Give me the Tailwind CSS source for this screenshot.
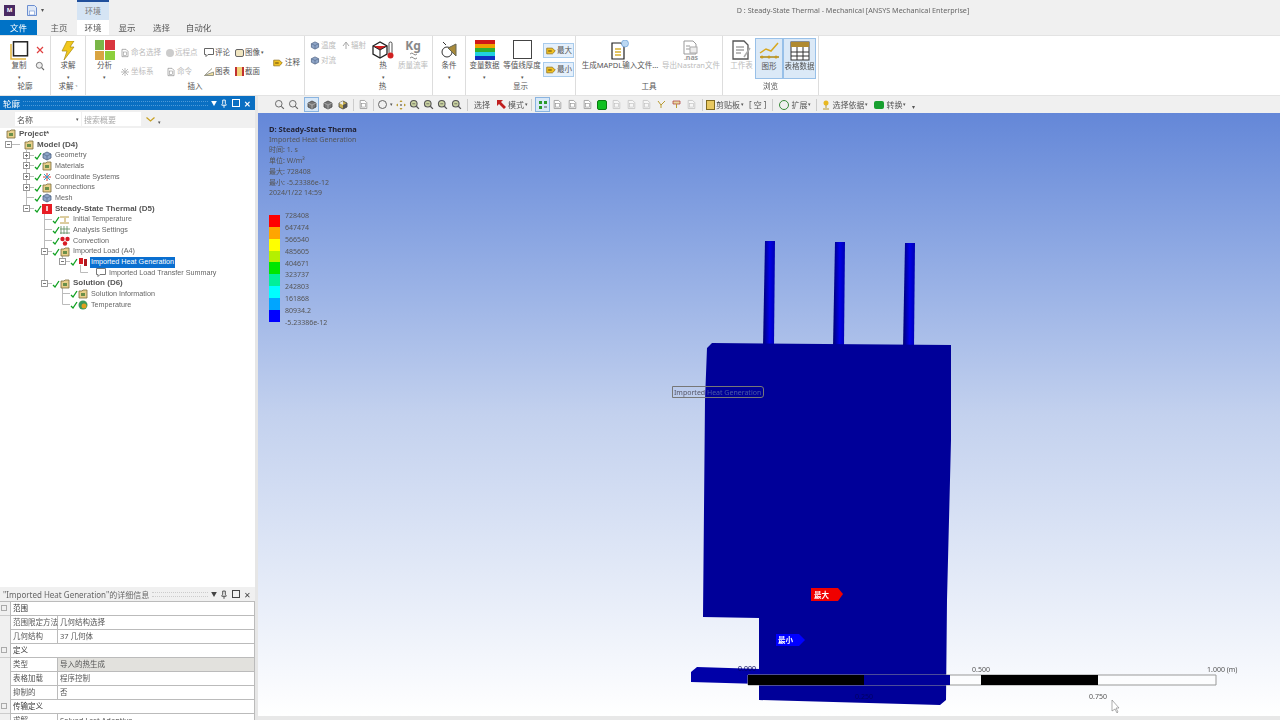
<!DOCTYPE html>
<html lang="zh">
<head>
<meta charset="UTF-8">
<title>D : Steady-State Thermal - Mechanical</title>
<script src="https://cdn.jsdelivr.net/npm/@tailwindcss/browser@4"></script>
</head>
<body class="w-[1280px] h-[720px] overflow-hidden bg-[#f0f0f0] text-[#555] text-[7.5px] leading-[11px] blur-[0.3px] font-['Noto_Sans','Noto_Sans_CJK_SC',sans-serif]">

<!-- shared icons -->
<svg class="hidden">
  <symbol id="box" viewBox="0 0 10 10"><path d="M1 2h3l1-1h4v8H1z" fill="#e8cf8a" stroke="#7a6a3a" stroke-width=".8"/><rect x="3" y="4" width="4" height="3" fill="#6b8f4a"/></symbol>
  <symbol id="cube" viewBox="0 0 10 10"><path d="M1 3l4-2 4 2v4l-4 2-4-2z" fill="#8fa6c8" stroke="#4a5f80" stroke-width=".8"/><path d="M1 3l4 2 4-2M5 5v4" fill="none" stroke="#4a5f80" stroke-width=".6"/></symbol>
  <symbol id="gcube" viewBox="0 0 10 10"><path d="M1 3l4-2 4 2v4l-4 2-4-2z" fill="#777" stroke="#444" stroke-width=".8"/><path d="M1 3l4 2 4-2M5 5v4" fill="none" stroke="#ccc" stroke-width=".6"/></symbol>
  <symbol id="ccube" viewBox="0 0 10 10"><path d="M1 3l4-2 4 2v4l-4 2-4-2z" fill="#c8b050" stroke="#444" stroke-width=".8"/><path d="M5 5v4l4-2V3z" fill="#555"/><path d="M1 3l4-2v4z" fill="#eee"/></symbol>
  <symbol id="doc" viewBox="0 0 15 15"><path d="M3 2h6l3 3v8H3z" fill="#fff" stroke="#8a8a8a"/><rect x="5" y="6" width="5" height="5" fill="none" stroke="#8a8a8a" stroke-width=".8"/></symbol>
  <symbol id="mag" viewBox="0 0 15 15"><circle cx="6.500" cy="6.500" r="4.500" fill="#eee" stroke="#666" stroke-width="1.300"/><path d="M10 10l3.500 3.500" stroke="#666" stroke-width="1.600"/></symbol>
  <symbol id="magg" viewBox="0 0 15 15"><circle cx="6.500" cy="6.500" r="4.500" fill="#c9d2a0" stroke="#555" stroke-width="1.500"/><path d="M10 10l3.500 3.500" stroke="#555" stroke-width="1.800"/><path d="M4.500 6.500h4" stroke="#555"/></symbol>
  <symbol id="tag" viewBox="0 0 14 10"><path d="M1 1h8l4 4-4 4H1z" fill="#f0c020" stroke="#8a6a10"/><rect x="3" y="4" width="5" height="2" fill="#8a6a10"/></symbol>
  <symbol id="check" viewBox="0 0 8 8"><path d="M1 5l2 2 4-6" fill="none" stroke="#10a020" stroke-width="1.300"/></symbol>
  <symbol id="pin" viewBox="0 0 7 10"><path d="M2 1h3v4l1 1v1H1V6l1-1zM3.500 7v3" fill="none" stroke="currentColor" stroke-width="1.100"/></symbol>
</svg>

<!-- title bar and tabs -->
<header class="h-[35px] relative flex flex-col">
  <div class="h-5 flex items-center">
    <div class="w-[11px] h-[11px] ml-1 bg-[#4a2a63] text-white text-[6px] leading-[11px] text-center font-bold">M</div>
    <svg class="ml-3 w-[10px] h-[11px]" viewBox="0 0 10 11"><path d="M.5.500h7l2 2v8h-9z" fill="#dfe8f6" stroke="#6b8ed0"/><rect x="2.500" y="6" width="5" height="4" fill="#fff" stroke="#6b8ed0" stroke-width=".6"/></svg>
    <span class="ml-1 text-[6px]">▾</span>
    <div class="absolute left-[77px] top-0 w-[32px] h-[20px] bg-[#d5e4f4] border-t-2 border-[#1f4f9c] text-center text-[8px] leading-[18px] text-[#777]">环境</div>
    <div class="flex-1 text-center pl-[382px] text-[7.2px] text-[#666]">D : Steady-State Thermal - Mechanical [ANSYS Mechanical Enterprise]</div>
  </div>
  <nav class="h-[15px] flex items-stretch text-center leading-[15px] text-[8.5px]">
    <div class="w-[37px] bg-[#0072c6] text-white">文件</div>
    <div class="w-[40px] pl-[4px]">主页</div>
    <div class="w-[32px] bg-white">环境</div>
    <div class="w-[36px]">显示</div>
    <div class="w-[33px]">选择</div>
    <div class="w-[41px]">自动化</div>
  </nav>
</header>

<!-- ribbon -->
<section class="h-[61px] bg-white border-y border-[#e3e3e3] flex">
  <div class="w-[51px] flex flex-col border-r border-[#ddd]">
    <div class="h-[45px] flex pl-[9px] pt-[5px]">
      <div class="w-[20px] flex flex-col items-center">
        <svg class="w-[19px] h-[19px]" viewBox="0 0 19 19"><path d="M1 3v15h15" fill="none" stroke="#e3b53a" stroke-width="1.500"/><rect x="3.500" y=".8" width="14" height="14" fill="#fff" stroke="#222" stroke-width="1.500"/></svg>
        <span>复制</span><span class="text-[5px] leading-[7px] mt-[3px]">▾</span>
      </div>
      <div class="ml-[6px] flex flex-col items-center gap-[7px] pt-[5px]">
        <svg class="w-[8px] h-[8px]" viewBox="0 0 8 8"><path d="M1 1l6 6M7 1L1 7" stroke="#e04040" stroke-width="1.200"/></svg>
        <svg class="w-[10px] h-[10px]"><use href="#mag"/></svg>
      </div>
    </div>
    <div class="h-[14px] text-center leading-[11px]">轮廓</div>
  </div>

  <div class="w-[35px] flex flex-col border-r border-[#ddd]">
    <div class="h-[45px] flex flex-col items-center pt-[5px]">
      <svg class="w-[14px] h-[19px]" viewBox="0 0 14 19"><path d="M6 0h7L9 6h4L3 19l3-9H1z" fill="#f2c81c" stroke="#a88a10" stroke-width=".7"/></svg>
      <span>求解</span><span class="text-[5px] leading-[7px] mt-[3px]">▾</span>
    </div>
    <div class="h-[14px] text-center leading-[11px]">求解 <span class="text-[5px]">⌝</span></div>
  </div>

  <div class="w-[219px] flex flex-col border-r border-[#ddd]">
    <div class="h-[45px] flex pt-[4px]">
      <div class="w-[34px] pl-[3px] flex flex-col items-center">
        <div class="grid grid-cols-2 gap-[1px] w-[20px] h-[20px]">
          <div class="bg-[#7ab648]"></div><div class="bg-[#d9363e]"></div><div class="bg-[#d9a441]"></div><div class="bg-[#8ccf3c]"></div>
        </div>
        <span>分析</span><span class="text-[5px] leading-[7px] mt-[3px]">▾</span>
      </div>
      <div class="grid grid-cols-[46px_38px_31px_38px] grid-rows-[19px_19px] pt-[3px] h-fit">
        <div class="flex items-center gap-[1px] text-[#bbb]"><svg class="w-[10px] h-[10px]"><use href="#doc"/></svg>命名选择</div>
        <div class="flex items-center gap-[1px] text-[#bbb]"><span class="w-[8px] h-[8px] rounded-full bg-[#ccc]"></span>远程点</div>
        <div class="flex items-center gap-[1px]"><svg class="w-[10px] h-[9px]" viewBox="0 0 10 9"><path d="M.5.500h9v6H4L2 8.500V6.500H.5z" fill="#fff" stroke="#666"/></svg>评论</div>
        <div class="flex items-center gap-[1px]"><span class="w-[9px] h-[8px] bg-[#f0e5c0] border border-[#666] rounded-[2px]"></span>图像<span class="text-[5px]">▾</span></div>
        <div class="flex items-center gap-[1px] text-[#bbb]"><svg class="w-[10px] h-[10px]" viewBox="0 0 10 10"><path d="M5 1v8M1 5h8M2 2l6 6M8 2l-6 6" stroke="#bbb"/></svg>坐标系</div>
        <div class="flex items-center gap-[1px] text-[#bbb]"><svg class="w-[10px] h-[10px]"><use href="#doc"/></svg>命令</div>
        <div class="flex items-center gap-[1px]"><svg class="w-[10px] h-[9px]" viewBox="0 0 10 9"><path d="M.5 8.500L8 1.500M.5 8.500H9.500V5z" fill="#f0dfa0" stroke="#998"/></svg>图表</div>
        <div class="flex items-center gap-[1px]"><span class="w-[9px] h-[9px] bg-[#f1d27a] border-x-2 border-[#c03030]"></span>截面</div>
      </div>
      <div class="mt-[17px] h-fit flex items-center gap-[2px] whitespace-nowrap"><svg class="w-[10px] h-[8px]"><use href="#tag"/></svg>注释</div>
    </div>
    <div class="h-[14px] text-center leading-[11px]">插入</div>
  </div>

  <div class="w-[128px] flex flex-col border-r border-[#ddd]">
    <div class="h-[45px] flex pt-[4px] pl-[5px]">
      <div class="w-[59px] flex flex-col gap-[4px] text-[#bbb]">
        <div class="flex gap-[6px] whitespace-nowrap">
          <span class="flex items-center gap-[1px]"><svg class="w-[10px] h-[9px]"><use href="#cube"/></svg>温度</span>
          <span class="flex items-center gap-[1px]"><svg class="w-[8px] h-[9px]" viewBox="0 0 8 9"><path d="M4 1v7M1 5l3-4 3 4" fill="none" stroke="#aaa"/></svg>辐射</span>
        </div>
        <span class="flex items-center gap-[1px]"><svg class="w-[10px] h-[9px]"><use href="#cube"/></svg>对流</span>
      </div>
      <div class="w-[28px] flex flex-col items-center">
        <svg class="w-[22px] h-[20px]" viewBox="0 0 22 20"><path d="M1 6l7-4 7 4v8l-7 4-7-4z" fill="#fff" stroke="#222" stroke-width="1.300"/><path d="M1 6l7 4 7-4" fill="#d02020" stroke="#222"/><path d="M8 10v8" stroke="#222"/><rect x="17" y="2" width="3" height="12" rx="1.500" fill="#fff" stroke="#222" stroke-width=".8"/><circle cx="18.500" cy="15.500" r="3" fill="#d02020"/></svg>
        <span>热</span><span class="text-[5px] leading-[7px] mt-[3px]">▾</span>
      </div>
      <div class="w-[32px] flex flex-col items-center text-[#bbb]">
        <span class="text-[12px] leading-[12px] font-bold text-[#888]">Kg</span>
        <svg class="w-[9px] h-[8px]" viewBox="0 0 9 8"><path d="M1 2q2-2 3.500 0t3.500 0M1 6q2-2 3.500 0t3.500 0" fill="none" stroke="#888"/></svg>
        <span class="whitespace-nowrap">质量流率</span>
      </div>
    </div>
    <div class="h-[14px] text-center leading-[11px] pl-[28px]">热</div>
  </div>

  <div class="w-[33px] flex flex-col border-r border-[#ddd]">
    <div class="h-[45px] flex flex-col items-center pt-[4px]">
      <svg class="w-[18px] h-[20px]" viewBox="0 0 18 20"><circle cx="7" cy="12" r="5" fill="#fff" stroke="#333"/><path d="M8 8l8-4v12z" fill="#a88a3a" stroke="#665"/><path d="M3 2l3 3" stroke="#333"/></svg>
      <span>条件</span><span class="text-[5px] leading-[7px] mt-[3px]">▾</span>
    </div>
    <div class="h-[14px]"></div>
  </div>

  <div class="w-[110px] flex flex-col border-r border-[#ddd]">
    <div class="h-[45px] flex pt-[4px]">
      <div class="w-[36px] pl-[1px] flex flex-col items-center">
        <div class="w-[20px] h-[20px] flex flex-col">
          <div class="h-[4px] bg-[#d01818]"></div><div class="h-[4px] bg-[#f0a000]"></div><div class="h-[4px] bg-[#30b030]"></div><div class="h-[4px] bg-[#20d0e0]"></div><div class="h-[4px] bg-[#1030c0]"></div>
        </div>
        <span class="whitespace-nowrap">变量数据</span><span class="text-[5px] leading-[7px] mt-[3px]">▾</span>
      </div>
      <div class="w-[40px] flex flex-col items-center">
        <div class="w-[19px] h-[19px] mb-[1px] border border-[#444] bg-white"></div>
        <span class="whitespace-nowrap">等值线厚度</span><span class="text-[5px] leading-[7px] mt-[3px]">▾</span>
      </div>
      <div class="ml-[1px] w-[31px] flex flex-col gap-[4px] pt-[3px]">
        <div class="h-[15px] flex items-center gap-[1px] pl-[2px] bg-[#e5f0fb] border border-[#a8cbec]"><svg class="w-[10px] h-[8px]"><use href="#tag"/></svg>最大</div>
        <div class="h-[15px] flex items-center gap-[1px] pl-[2px] bg-[#e5f0fb] border border-[#a8cbec]"><svg class="w-[10px] h-[8px]"><use href="#tag"/></svg>最小</div>
      </div>
    </div>
    <div class="h-[14px] text-center leading-[11px]">显示</div>
  </div>

  <div class="w-[147px] flex flex-col border-r border-[#ddd]">
    <div class="h-[45px] flex pt-[4px]">
      <div class="w-[88px] flex flex-col items-center">
        <svg class="w-[20px] h-[20px]" viewBox="0 0 20 20"><path d="M2 3h9l3 3v13H2z" fill="#fff" stroke="#222" stroke-width="1.200"/><path d="M5 9h6M5 12h6M5 15h6" stroke="#d8b030" stroke-width="1.300"/><circle cx="15" cy="3.500" r="3.500" fill="#bcd8f2" stroke="#6aa0d8" stroke-width=".7"/></svg>
        <span class="whitespace-nowrap">生成MAPDL输入文件...</span>
      </div>
      <div class="w-[54px] flex flex-col items-center text-[#bbb]">
        <svg class="w-[18px] h-[15px]" viewBox="0 0 18 15"><path d="M2 1h9l3 3v10H2z" fill="#fff" stroke="#999"/><path d="M4 6h4M4 9h4" stroke="#999"/><rect x="8" y="7" width="7" height="6" fill="#eee" stroke="#aaa"/></svg>
        <span class="text-[7px] leading-[5px] font-bold text-[#999]">.nas</span>
        <span class="whitespace-nowrap">导出Nastran文件</span>
      </div>
    </div>
    <div class="h-[14px] text-center leading-[11px]">工具</div>
  </div>

  <div class="w-[96px] flex flex-col border-r border-[#ddd]">
    <div class="h-[45px] flex pt-[2px] pl-[5px] items-start">
      <div class="w-[27px] h-[41px] pt-[2px] flex flex-col items-center text-[#bbb]">
        <svg class="w-[19px] h-[20px]" viewBox="0 0 19 20"><path d="M1 1h11l4 4v14H1z" fill="#fff" stroke="#555" stroke-width="1.300"/><path d="M4 7h8M4 10h8M4 13h5" stroke="#777"/><path d="M18 8l-6 9" stroke="#aaa" stroke-width="1.500"/></svg>
        <span>工作表</span>
      </div>
      <div class="w-[28px] h-[41px] pt-[2px] bg-[#dbe9f7] border border-[#98c0e8] flex flex-col items-center">
        <svg class="w-[21px] h-[20px]" viewBox="0 0 21 20"><path d="M1 12l6-4 5 2 7-8" fill="none" stroke="#d8a820" stroke-width="1.500"/><path d="M1 16h19" stroke="#a88a20" stroke-width="1.500"/><circle cx="3" cy="16" r="1.500" fill="#c89a20"/><circle cx="10" cy="16" r="1.500" fill="#c89a20"/><circle cx="17" cy="16" r="1.500" fill="#c89a20"/></svg>
        <span>图形</span>
      </div>
      <div class="w-[33px] h-[41px] pt-[2px] bg-[#dbe9f7] border border-[#98c0e8] flex flex-col items-center">
        <svg class="w-[20px] h-[20px]" viewBox="0 0 20 20"><rect x="1" y="1" width="18" height="18" fill="#fff" stroke="#333"/><rect x="1" y="1" width="18" height="5" fill="#b08a30"/><path d="M1 11h18M1 15h18M7 6v13M13 6v13" stroke="#333"/></svg>
        <span class="whitespace-nowrap">表格数据</span>
      </div>
    </div>
    <div class="h-[14px] text-center leading-[11px]">浏览</div>
  </div>
</section>

<main class="flex h-[624px]">
  <!-- left column: outline tree on top, details below -->
  <aside class="w-[258px] flex flex-col border-r-[3px] border-[#e6e6e6] bg-white">
    <div class="h-[14px] bg-[#0a6fc2] text-white flex items-center pl-[3px] pr-[4px] text-[8.5px]">
      <span>轮廓</span>
      <span class="flex-1 mx-[3px] h-[5px] border-y border-dotted border-[#4f9ad8]"></span>
      <span class="w-[40px] flex items-center justify-between text-[8px] font-bold"><span class="text-[6px]">▼</span><svg class="w-[6px] h-[9px]"><use href="#pin"/></svg><span class="w-[8px] h-[8px] border border-white"></span><span>✕</span></span>
    </div>
    <div class="h-[18px] bg-[#f0f0f0] flex items-center pl-[15px] gap-[1px] text-[8px]">
      <div class="w-[66px] h-[14px] bg-white flex items-center justify-between px-[2px]">名称<span class="text-[5px]">▾</span></div>
      <div class="w-[59px] h-[14px] bg-white flex items-center px-[2px] text-[#aaa]">搜索概要</div>
      <svg class="ml-[4px] w-[9px] h-[5px]" viewBox="0 0 9 5"><path d="M.5.500l4 3.500 4-3.500" fill="none" stroke="#c8a020" stroke-width="1.200"/></svg>
      <span class="text-[5px] mt-[6px] ml-[2px]">▾</span>
    </div>

    <div class="relative h-[459px] pt-[1px] text-[7.2px] leading-[10.67px] text-[#666] font-['Liberation_Sans','Noto_Sans_CJK_SC',sans-serif]">
      <!-- tree connector lines and expanders -->
      <svg class="absolute left-0 top-0 w-[120px] h-[200px]" viewBox="0 0 120 200" fill="none" stroke="#bbb" stroke-width="1">
        <path d="M12 16.500H20M26.500 22V77M26.500 27.500H34M26.500 37.500H34M26.500 48.500H34M26.500 59.500H34M26.500 69.500H34M30 80.500H34M44.500 86V152M44.500 91.500H52M44.500 101.500H52M44.500 112.500H52M48 123.500H52M62.500 127V130M66 133.500H70M80.500 137V144.500H88M48 155.500H52M62.500 160V176.500M62.500 165.500H70M62.500 176.500H70"/>
        <g fill="#fff" stroke="#999">
          <rect x="5.500" y="13.500" width="6" height="6"/><rect x="23.500" y="24.500" width="6" height="6"/><rect x="23.500" y="34.500" width="6" height="6"/><rect x="23.500" y="45.500" width="6" height="6"/><rect x="23.500" y="56.500" width="6" height="6"/><rect x="23.500" y="77.500" width="6" height="6"/><rect x="41.500" y="120.500" width="6" height="6"/><rect x="59.500" y="130.500" width="6" height="6"/><rect x="41.500" y="152.500" width="6" height="6"/>
        </g>
        <path stroke="#777" d="M7 16.500h3M25 27.500h3M26.500 26v3M25 37.500h3M26.500 36v3M25 48.500h3M26.500 47v3M25 59.500h3M26.500 58v3M25 80.500h3M43 123.500h3M61 133.500h3M43 155.500h3"/>
      </svg>

      <div class="relative flex items-center h-[10.67px] pl-[6px] font-bold text-[8px] text-[#555]"><svg class="w-[10px] h-[10px] mr-[3px]"><use href="#box"/></svg>Project*</div>
      <div class="relative flex items-center h-[10.67px] pl-[24px] font-bold text-[8px] text-[#555]"><svg class="w-[10px] h-[10px] mr-[3px]"><use href="#box"/></svg>Model (D4)</div>
      <div class="relative flex items-center h-[10.67px] pl-[34px]"><svg class="w-[8px] h-[8px]"><use href="#check"/></svg><svg class="w-[10px] h-[10px] mr-[3px]"><use href="#cube"/></svg>Geometry</div>
      <div class="relative flex items-center h-[10.67px] pl-[34px]"><svg class="w-[8px] h-[8px]"><use href="#check"/></svg><svg class="w-[10px] h-[10px] mr-[3px]"><use href="#box"/></svg>Materials</div>
      <div class="relative flex items-center h-[10.67px] pl-[34px]"><svg class="w-[8px] h-[8px]"><use href="#check"/></svg><svg class="w-[10px] h-[10px] mr-[3px]" viewBox="0 0 10 10"><path d="M5 1v8M1 5h8" stroke="#d04040"/><path d="M2 2l6 6M8 2L2 8" stroke="#30a0d0"/></svg>Coordinate Systems</div>
      <div class="relative flex items-center h-[10.67px] pl-[34px]"><svg class="w-[8px] h-[8px]"><use href="#check"/></svg><svg class="w-[10px] h-[10px] mr-[3px]"><use href="#box"/></svg>Connections</div>
      <div class="relative flex items-center h-[10.67px] pl-[34px]"><svg class="w-[8px] h-[8px]"><use href="#check"/></svg><svg class="w-[10px] h-[10px] mr-[3px]"><use href="#cube"/></svg>Mesh</div>
      <div class="relative flex items-center h-[10.67px] pl-[34px] font-bold text-[8px] text-[#555]"><svg class="w-[8px] h-[8px]"><use href="#check"/></svg><svg class="w-[10px] h-[10px] mr-[3px]" viewBox="0 0 10 10"><rect width="10" height="10" fill="#e81c24"/><path d="M5 2v5" stroke="#fff" stroke-width="1.500"/></svg>Steady-State Thermal (D5)</div>
      <div class="relative flex items-center h-[10.67px] pl-[52px]"><svg class="w-[8px] h-[8px]"><use href="#check"/></svg><svg class="w-[10px] h-[10px] mr-[3px]" viewBox="0 0 10 10"><path d="M0 2h9M0 8h9M5 3v4" stroke="#b89a40"/></svg>Initial Temperature</div>
      <div class="relative flex items-center h-[10.67px] pl-[52px]"><svg class="w-[8px] h-[8px]"><use href="#check"/></svg><svg class="w-[10px] h-[10px] mr-[3px]" viewBox="0 0 10 10"><path d="M1 1v8M4 1v8M7 1v8M0 4h10M0 8h10" stroke="#5a8a5a" stroke-width=".8"/></svg>Analysis Settings</div>
      <div class="relative flex items-center h-[10.67px] pl-[52px]"><svg class="w-[8px] h-[8px]"><use href="#check"/></svg><svg class="w-[10px] h-[10px] mr-[3px]" viewBox="0 0 10 10"><circle cx="2.500" cy="3" r="2.200" fill="#d81c24"/><circle cx="7.500" cy="3" r="2.200" fill="#d81c24"/><circle cx="5" cy="7.500" r="2.200" fill="#d81c24"/></svg>Convection</div>
      <div class="relative flex items-center h-[10.67px] pl-[52px]"><svg class="w-[8px] h-[8px]"><use href="#check"/></svg><svg class="w-[10px] h-[10px] mr-[3px]"><use href="#box"/></svg>Imported Load (A4)</div>
      <div class="relative flex items-center h-[10.67px] pl-[70px]"><svg class="w-[8px] h-[8px]"><use href="#check"/></svg><svg class="w-[10px] h-[10px] mr-[3px]" viewBox="0 0 10 10"><rect x="1" y="1" width="4" height="6" fill="#d81c24"/><rect x="6" y="2" width="3" height="7" fill="#b01820"/></svg><span class="bg-[#0a6fd0] text-white -ml-[1px] px-[1px]">Imported Heat Generation</span></div>
      <div class="relative flex items-center h-[10.67px] pl-[88px]"><span class="w-[8px]"></span><svg class="w-[10px] h-[9px] mr-[3px]" viewBox="0 0 10 9"><path d="M.5.500h9v6H4L2 8.500V6.500H.5z" fill="#fff" stroke="#777"/></svg>Imported Load Transfer Summary</div>
      <div class="relative flex items-center h-[10.67px] pl-[52px] font-bold text-[8px] text-[#555]"><svg class="w-[8px] h-[8px]"><use href="#check"/></svg><svg class="w-[10px] h-[10px] mr-[3px]"><use href="#box"/></svg>Solution (D6)</div>
      <div class="relative flex items-center h-[10.67px] pl-[70px]"><svg class="w-[8px] h-[8px]"><use href="#check"/></svg><svg class="w-[10px] h-[10px] mr-[3px]"><use href="#box"/></svg>Solution Information</div>
      <div class="relative flex items-center h-[10.67px] pl-[70px]"><svg class="w-[8px] h-[8px]"><use href="#check"/></svg><svg class="w-[10px] h-[10px] mr-[3px]" viewBox="0 0 10 10"><circle cx="5" cy="5" r="4.500" fill="#3a9a5a"/><circle cx="6" cy="6" r="2.500" fill="#e0a020"/></svg>Temperature</div>
    </div>

    <!-- details panel -->
    <div class="h-[14px] bg-[#f0f0f0] flex items-center pl-[3px] pr-[4px] text-[8px] text-[#666]">
      <span class="whitespace-nowrap">"Imported Heat Generation"的详细信息</span>
      <span class="flex-1 mx-[3px] h-[5px] border-y border-dotted border-[#ccc]"></span>
      <span class="w-[40px] flex items-center justify-between text-[8px] text-[#444]"><span class="text-[6px]">▼</span><svg class="w-[6px] h-[9px]"><use href="#pin"/></svg><span class="w-[8px] h-[8px] border border-[#444]"></span><span>✕</span></span>
    </div>
    <div class="overflow-hidden flex-1 grid grid-cols-[10px_48px_1fr] auto-rows-[14px] border-t border-[#bbb] leading-[13px]">
      <div class="bg-[#f0f0f0] border-b border-[#ccc] pl-[1px]"><div class="w-[6px] h-[6px] border border-[#aaa] mt-[3px]"></div></div><div class="col-span-2 border-x border-b border-[#bbb] pl-[2px] text-[#333]">范围</div>
      <div class="bg-[#f0f0f0]"></div><div class="border-x border-b border-[#bbb] pl-[2px] whitespace-nowrap">范围限定方法</div><div class="border-r border-b border-[#bbb] pl-[2px]">几何结构选择</div>
      <div class="bg-[#f0f0f0]"></div><div class="border-x border-b border-[#bbb] pl-[2px]">几何结构</div><div class="border-r border-b border-[#bbb] pl-[2px]">37 几何体</div>
      <div class="bg-[#f0f0f0] border-b border-[#ccc] pl-[1px]"><div class="w-[6px] h-[6px] border border-[#aaa] mt-[3px]"></div></div><div class="col-span-2 border-x border-b border-[#bbb] pl-[2px] text-[#333]">定义</div>
      <div class="bg-[#f0f0f0]"></div><div class="border-x border-b border-[#bbb] pl-[2px]">类型</div><div class="border-r border-b border-[#bbb] pl-[2px] bg-[#e2e1dd]">导入的热生成</div>
      <div class="bg-[#f0f0f0]"></div><div class="border-x border-b border-[#bbb] pl-[2px]">表格加载</div><div class="border-r border-b border-[#bbb] pl-[2px]">程序控制</div>
      <div class="bg-[#f0f0f0]"></div><div class="border-x border-b border-[#bbb] pl-[2px]">抑制的</div><div class="border-r border-b border-[#bbb] pl-[2px]">否</div>
      <div class="bg-[#f0f0f0] border-b border-[#ccc] pl-[1px]"><div class="w-[6px] h-[6px] border border-[#aaa] mt-[3px]"></div></div><div class="col-span-2 border-x border-b border-[#bbb] pl-[2px] text-[#333]">传输定义</div>
      <div class="bg-[#f0f0f0]"></div><div class="border-x border-b border-[#bbb] pl-[2px]">求解</div><div class="border-r border-b border-[#bbb] pl-[2px]">Solved Last Adaptive</div>
    </div>
  </aside>

  <!-- graphics area -->
  <div class="flex-1 flex flex-col">
    <div class="h-[17px] flex items-center pl-[16px] bg-[#f0f0f0] text-[8px]">
      <svg class="w-[11px] h-[11px] mr-[3px]"><use href="#mag"/></svg>
      <svg class="w-[11px] h-[11px] mr-[5px]"><use href="#mag"/></svg>
      <span class="w-[15px] h-[15px] bg-[#d8e8f8] border border-[#8ab4e0] flex items-center justify-center mr-[1px]"><svg class="w-[10px] h-[10px]"><use href="#gcube"/></svg></span>
      <svg class="w-[10px] h-[10px] mx-[3px]"><use href="#gcube"/></svg>
      <svg class="w-[10px] h-[10px] mx-[2px]"><use href="#ccube"/></svg>
      <span class="w-px h-[12px] bg-[#ccc] mx-[3px]"></span>
      <svg class="w-[11px] h-[11px] mx-[1px]"><use href="#doc"/></svg>
      <span class="w-px h-[12px] bg-[#ccc] mx-[3px]"></span>
      <span class="w-[9px] h-[9px] rounded-full border border-[#666] ml-[1px]"></span>
      <span class="text-[5px] mx-[3px]">▾</span>
      <svg class="w-[10px] h-[10px] mr-[3px]" viewBox="0 0 10 10"><path d="M5 0l1.500 2h-3zM5 10l1.500-2h-3zM0 5l2-1.500v3zM10 5L8 3.500v3z" fill="#b89a30"/><circle cx="5" cy="5" r="1" fill="#777"/></svg>
      <svg class="w-[11px] h-[11px] mr-[3px]"><use href="#magg"/></svg>
      <svg class="w-[11px] h-[11px] mr-[3px]"><use href="#magg"/></svg>
      <svg class="w-[11px] h-[11px] mr-[3px]"><use href="#magg"/></svg>
      <svg class="w-[11px] h-[11px] mr-[5px]"><use href="#magg"/></svg>
      <span class="w-px h-[12px] bg-[#ccc] mr-[6px]"></span>
      <span class="mr-[7px]">选择</span>
      <svg class="w-[10px] h-[9px] mr-[1px]" viewBox="0 0 10 9"><path d="M0 0h6L4 2l5 5-2 2-5-5-2 2z" fill="#c02020"/></svg><span class="mr-[1px]">模式</span><span class="text-[5px]">▾</span>
      <span class="w-px h-[12px] bg-[#ccc] mx-[3px]"></span>
      <span class="w-[15px] h-[15px] bg-[#d8e8f8] border border-[#8ab4e0] flex items-center justify-center"><svg class="w-[10px] h-[10px]" viewBox="0 0 10 10"><path d="M1 1h3v3H1zM6 1h3v3H6zM1 6h3v3H1z" fill="#2a9a2a"/><path d="M6 7h3" stroke="#555"/></svg></span>
      <svg class="w-[11px] h-[11px] mx-[2px]"><use href="#doc"/></svg>
      <svg class="w-[11px] h-[11px] mx-[2px]"><use href="#doc"/></svg>
      <svg class="w-[11px] h-[11px] mx-[2px]"><use href="#doc"/></svg>
      <span class="w-[10px] h-[10px] rounded-[2px] bg-[#10c020] border border-[#0a7a10] mx-[2px]"></span>
      <svg class="w-[11px] h-[11px] mx-[2px] opacity-50"><use href="#doc"/></svg>
      <svg class="w-[11px] h-[11px] mx-[2px] opacity-50"><use href="#doc"/></svg>
      <svg class="w-[11px] h-[11px] mx-[2px] opacity-50"><use href="#doc"/></svg>
      <svg class="w-[11px] h-[11px] mx-[2px]" viewBox="0 0 11 11"><path d="M2 2l3 4 4-4M5 6v3" fill="none" stroke="#b89a30"/></svg>
      <svg class="w-[11px] h-[11px] mx-[2px]" viewBox="0 0 11 11"><path d="M2 2h7v3H2z" fill="#e8d8a0" stroke="#a33" stroke-width=".7"/><path d="M5.500 5v4" stroke="#b89a30"/></svg>
      <svg class="w-[11px] h-[11px] mx-[2px] opacity-50"><use href="#doc"/></svg>
      <span class="w-px h-[12px] bg-[#ccc] mx-[3px]"></span>
      <span class="w-[9px] h-[10px] bg-[#e8c860] border border-[#806a20] mr-[1px]"></span><span class="mr-[1px] whitespace-nowrap">剪贴板</span><span class="text-[5px]">▾</span>
      <span class="ml-[5px] whitespace-nowrap">[ 空 ]</span>
      <span class="w-px h-[12px] bg-[#ccc] mx-[6px]"></span>
      <span class="w-[10px] h-[10px] rounded-full border border-[#3a8a3a] mr-[2px]"></span><span class="mr-[1px] whitespace-nowrap">扩展</span><span class="text-[5px]">▾</span>
      <span class="w-px h-[12px] bg-[#ccc] mx-[5px]"></span>
      <svg class="w-[8px] h-[10px] mr-[2px]" viewBox="0 0 8 10"><circle cx="4" cy="3" r="2.500" fill="#e8b820"/><path d="M4 5v3M1 9h6" stroke="#b89a30"/></svg><span class="mr-[1px] whitespace-nowrap">选择依据</span><span class="text-[5px]">▾</span>
      <span class="ml-[6px] w-[10px] h-[8px] rounded-[2px] bg-[#18a030] mr-[2px]"></span><span class="mr-[1px] whitespace-nowrap">转换</span><span class="text-[5px]">▾</span>
      <span class="ml-[6px] text-[6px] mt-[5px]">▾</span>
    </div>

    <div class="relative h-[607px] bg-linear-to-b from-[#6487d8] via-[#c3d1ee] via-50% to-white text-[#555] overflow-hidden border-b-[4px] border-[#e8e8e8]">
      <!-- model on the free canvas -->
      <svg class="absolute inset-0 w-[1022px] h-[607px]" viewBox="258 113 1022 607">
        <defs><linearGradient id="pin-shade"><stop offset="0" stop-color="#000070"/><stop offset=".55" stop-color="#0000e8"/><stop offset="1" stop-color="#0000b0"/></linearGradient></defs>
        <path d="M765 241h10l-1 106h-11z" fill="url(#pin-shade)"/>
        <path d="M835 242h10l-1 105h-11z" fill="url(#pin-shade)"/>
        <path d="M905 243h10l-1 105h-11z" fill="url(#pin-shade)"/>
        <path d="M707 348l5-5 239 2v95l-4 160-1 100-6 5-181-5V618l-56-1 2-217z" fill="#000099"/>
        <path d="M691 672l6-5 63 2v15l-69-2z" fill="#0000a8"/>
        <path d="M748 675h468v10H748z" fill="#fff" fill-opacity=".55" stroke="#999"/>
        <path d="M864 675h86v10h-86z" fill="#000099"/>
        <path d="M748 675h116v10H748zM981 675h117v10H981z" fill="#000"/>
        <path d="M811 588h27l5 6-5 7h-27z" fill="#f00000"/>
        <path d="M776 634h23l6 6-6 6h-23z" fill="#0000ff"/>
        <path d="M1112 700v11l3-2 2 4 1-1-2-4h3z" fill="#fff" stroke="#777" stroke-width=".6"/>
      </svg>

      <!-- status text and legend -->
      <div class="absolute left-[11px] top-[11px] leading-[10.7px] text-[7px]">
        <div class="w-[88px] overflow-hidden whitespace-nowrap font-bold text-[#223] text-[7.5px]">D: Steady-State Thermal</div>
        <div>Imported Heat Generation</div>
        <div>时间: 1. s</div>
        <div>单位: W/m³</div>
        <div>最大: 728408</div>
        <div>最小: -5.23386e-12</div>
        <div>2024/1/22 14:59</div>
        <div class="flex mt-[16px]">
          <div class="w-[11px] flex flex-col">
            <div class="h-[11.900px] bg-[#ff0000]"></div>
            <div class="h-[11.900px] bg-[#ffa500]"></div>
            <div class="h-[11.900px] bg-[#ffff00]"></div>
            <div class="h-[11.900px] bg-[#b4f000]"></div>
            <div class="h-[11.900px] bg-[#00e600]"></div>
            <div class="h-[11.900px] bg-[#00f09a]"></div>
            <div class="h-[11.900px] bg-[#00ffff]"></div>
            <div class="h-[11.900px] bg-[#00a5ff]"></div>
            <div class="h-[11.900px] bg-[#0000ff]"></div>
          </div>
          <div class="ml-[5px] -mt-[5px] leading-[11.900px]">
            <div>728408</div><div>647474</div><div>566540</div><div>485605</div><div>404671</div><div>323737</div><div>242803</div><div>161868</div><div>80934.2</div><div>-5.23386e-12</div>
          </div>
        </div>
      </div>

      <!-- annotation label over the model -->
      <div class="absolute left-[414px] top-[273px] w-[92px] h-[12px] border border-[#777] rounded-r-[3px] text-[7px] leading-[11px] pl-[1px] text-[#556] whitespace-nowrap">Imported <span class="text-[#4a5aa8]">Heat Generation</span></div>

      <!-- probe tags -->
      <div class="absolute left-[556px] top-[477px] text-white font-bold text-[7.5px] leading-[11px]">最大</div>
      <div class="absolute left-[520px] top-[522px] text-white font-bold text-[7.5px] leading-[11px]">最小</div>

      <!-- scale labels -->
      <div class="absolute left-[480px] top-[551px] text-[7px] leading-[10px] text-[#000060]">0.000</div>
      <div class="absolute left-[714px] top-[552px] text-[7px] leading-[10px]">0.500</div>
      <div class="absolute left-[949px] top-[552px] text-[7px] leading-[10px] whitespace-nowrap">1.000 (m)</div>
      <div class="absolute left-[597px] top-[579px] text-[7px] leading-[10px] text-[#000060]">0.250</div>
      <div class="absolute left-[831px] top-[579px] text-[7px] leading-[10px]">0.750</div>
    </div>
  </div>
</main>
</body>
</html>
